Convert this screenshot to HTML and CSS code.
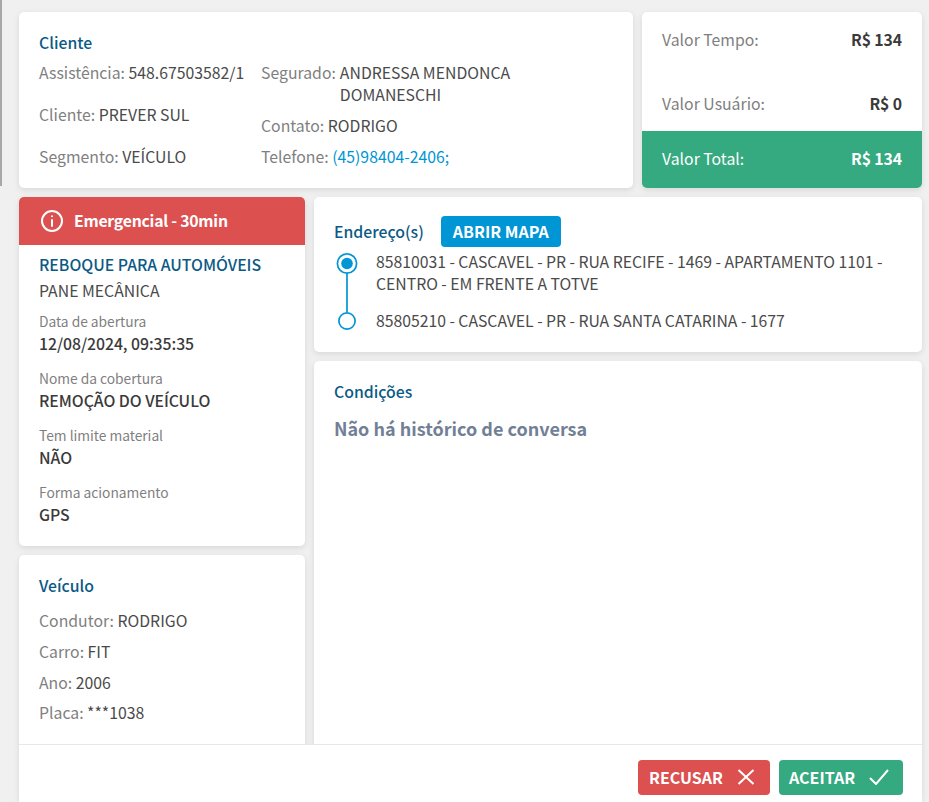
FILE: index.html
```html
<!DOCTYPE html>
<html lang="pt-BR">
<head>
<meta charset="utf-8">
<title>Serviço</title>
<link rel="stylesheet" href="styles.css">
</head>
<body>
<div class="edge"></div>
<main class="page">
  <section class="top">
    <div class="card client">
      <h2 class="title">Cliente</h2>
      <div class="client-cols">
        <div class="client-col spread">
          <p class="row"><span class="k">Assistência:</span> 548.67503582/1</p>
          <p class="row"><span class="k">Cliente:</span> PREVER SUL</p>
          <p class="row"><span class="k">Segmento:</span> VEÍCULO</p>
        </div>
        <div class="client-col">
          <p class="row hang"><span class="k">Segurado:</span> <span class="hang-v">ANDRESSA MENDONCA DOMANESCHI</span></p>
          <p class="row"><span class="k">Contato:</span> RODRIGO</p>
          <p class="row"><span class="k">Telefone:</span> <span class="link">(45)98404-2406;</span></p>
        </div>
      </div>
    </div>
    <div class="card values">
      <div class="value-list">
        <div class="value-row"><span class="k">Valor Tempo:</span><strong>R$ 134</strong></div>
        <div class="value-row"><span class="k">Valor Usuário:</span><strong>R$ 0</strong></div>
      </div>
      <div class="value-total"><span>Valor Total:</span><strong>R$ 134</strong></div>
    </div>
  </section>
  <section class="bottom">
    <div class="left">
      <div class="card service">
        <div class="alert">
          <svg class="alert-icon" viewBox="0 0 24 24" width="24" height="24" fill="none" stroke="#fff" stroke-width="2" stroke-linecap="round"><circle cx="12" cy="12" r="10"/><path d="M12 11v6"/><path d="M12 7.2v.1"/></svg>
          <span>Emergencial - 30min</span>
        </div>
        <div class="service-body">
          <h3 class="svc-name">REBOQUE PARA AUTOMÓVEIS</h3>
          <p class="svc-sub">PANE MECÂNICA</p>
          <div class="field"><span class="f-label">Data de abertura</span><span class="f-value">12/08/2024, 09:35:35</span></div>
          <div class="field"><span class="f-label">Nome da cobertura</span><span class="f-value">REMOÇÃO DO VEÍCULO</span></div>
          <div class="field"><span class="f-label">Tem limite material</span><span class="f-value">NÃO</span></div>
          <div class="field"><span class="f-label">Forma acionamento</span><span class="f-value">GPS</span></div>
        </div>
      </div>
      <div class="card vehicle">
        <h2 class="title">Veículo</h2>
        <p class="row"><span class="k">Condutor:</span> RODRIGO</p>
        <p class="row"><span class="k">Carro:</span> FIT</p>
        <p class="row"><span class="k">Ano:</span> 2006</p>
        <p class="row"><span class="k">Placa:</span> ***1038</p>
      </div>
    </div>
    <div class="right">
      <div class="card address">
        <div class="addr-head">
          <h2 class="title">Endereço(s)</h2>
          <button class="map-btn" type="button">ABRIR MAPA</button>
        </div>
        <div class="addr-body">
          <svg class="route" width="22" height="78" viewBox="0 0 22 78" fill="none" stroke="#0095d4" stroke-width="1.7"><circle cx="11" cy="10.5" r="9.6"/><circle cx="11" cy="10.5" r="5.8" fill="#0095d4" stroke="none"/><path d="M11 20v39"/><circle cx="11" cy="68" r="8.1"/></svg>
          <div class="addr-list">
            <p class="addr">85810031 - CASCAVEL - PR - RUA RECIFE - 1469 - APARTAMENTO 1101 - CENTRO - EM FRENTE A TOTVE</p>
            <p class="addr">85805210 - CASCAVEL - PR - RUA SANTA CATARINA - 1677</p>
          </div>
        </div>
      </div>
      <div class="card conditions">
        <h2 class="title">Condições</h2>
        <p class="empty">Não há histórico de conversa</p>
      </div>
    </div>
  </section>
</main>
<footer class="footer">
  <button class="action refuse" type="button">RECUSAR
    <svg width="18" height="18" viewBox="0 0 18 18" fill="none" stroke="#fff" stroke-width="2"><path d="M1.5 2l15 14M16.5 2l-15 14"/></svg>
  </button>
  <button class="action accept" type="button">ACEITAR
    <svg width="20" height="16" viewBox="0 0 20 16" fill="none" stroke="#fff" stroke-width="2"><path d="M1 9l6 6L19 1"/></svg>
  </button>
</footer>
</body>
</html>
```
FILE: styles.css
```css
* { box-sizing: border-box; }
html, body { height: 100%; }
body {
  margin: 0;
  background: #f0f0f0;
  overflow: hidden;
  font-family: "Noto Sans CJK SC", "Noto Sans", sans-serif;
  font-size: 15.8px;
  line-height: 22px;
  color: #4a4a4a;
}
p, h2, h3 { margin: 0; }
.edge { position: absolute; left: 0; top: 0; width: 2px; height: 186px; background: #a8a8a8; }
.page { height: 100vh; overflow: hidden; padding: 12px 7px 0 19px; display: flex; flex-direction: column; gap: 9px; }
.top { display: flex; gap: 9px; height: 176px; flex: none; }
.card { background: #fff; border-radius: 5px; box-shadow: 0 2px 6px rgba(0, 0, 0, .1); }
.title { font-size: 15.8px; font-weight: 500; line-height: 22px; color: #0b5a85; }
.k { color: #7f7f7f; }
.link { color: #0095d4; }
.client { flex: 1; padding: 20px; display: flex; flex-direction: column; gap: 8px; }
.client-cols { display: flex; gap: 16px; flex: 1; }
.client-col { display: flex; flex-direction: column; gap: 9px; }
.client-col.spread { justify-content: space-between; width: 206px; white-space: nowrap; }
.hang { display: flex; gap: 4px; width: 300px; }
.hang-v { flex: 1; }
.values { width: 280px; flex: none; display: flex; flex-direction: column; overflow: hidden; }
.value-list { flex: 1; padding: 17px 20px 16px; display: flex; flex-direction: column; justify-content: space-between; }
.value-row, .value-total { display: flex; justify-content: space-between; }
.value-row strong { color: #3a3a3a; font-weight: 700; letter-spacing: -.1px; }
.value-total { height: 57px; padding: 0 20px 1px; align-items: center; background: #35a97f; color: #fff; }
.value-total strong { font-weight: 700; letter-spacing: -.1px; }
.bottom { display: flex; gap: 9px; flex: 1; min-height: 0; }
.left { width: 286px; flex: none; display: flex; flex-direction: column; gap: 9px; }
.right { flex: 1; min-width: 0; display: flex; flex-direction: column; gap: 9px; }
.service { height: 349px; flex: none; overflow: hidden; }
.alert { height: 48px; padding: 0 21px 1px; display: flex; align-items: center; gap: 10px; background: #dc5050; color: #fff; font-weight: 700; letter-spacing: -.25px; }
.service-body { padding: 9px 20px; }
.svc-name { font-size: 15.8px; font-weight: 500; line-height: 22px; color: #0b5a85; }
.svc-sub { margin-top: 4px; }
.field { display: flex; flex-direction: column; margin-top: 8px; }
.field + .field { margin-top: 12px; }
.f-label { font-size: 13.8px; line-height: 22px; color: #7f7f7f; letter-spacing: -.03px; }
.f-value { margin-top: 1px; font-weight: 500; color: #3a3a3a; letter-spacing: -.05px; }
.vehicle { flex: 1; padding: 20px; display: flex; flex-direction: column; gap: 8.9px; }
.vehicle .title { margin-bottom: 4px; }
.vehicle .row:last-child { margin-top: -1px; }
.address { height: 155px; flex: none; padding: 19px 20px; }
.addr-head { display: flex; align-items: center; gap: 17px; }
.map-btn { height: 31px; width: 120px; border: 0; border-radius: 4px; background: #0095d4; color: #fff; font: 700 16px/22px "Noto Sans CJK SC", "Noto Sans", sans-serif; padding: 0 0 1px; }
.addr-body { display: flex; gap: 18px; margin-top: 4px; }
.route { flex: none; margin: 2px 0 0 2px; overflow: visible; }
.addr-list { flex: 1; min-width: 0; display: flex; flex-direction: column; gap: 15px; letter-spacing: -.03px; }
.conditions { flex: 1; padding: 20px; }
.empty { margin-top: 11px; font-size: 18px; line-height: 28px; font-weight: 700; color: #718096; }
.footer { position: fixed; left: 19px; right: 7px; bottom: 0; height: 58px; background: #fff; border-top: 1px solid #e8e8e8; display: flex; justify-content: flex-end; gap: 9px; padding: 15px 19px 0 0; }
.action { height: 35px; border: 0; border-radius: 4px; color: #fff; font: 700 16px/22px "Noto Sans CJK SC", "Noto Sans", sans-serif; display: flex; align-items: center; justify-content: space-between; padding: 0 15px 1px 11px; }
.accept { padding: 0 14px 1px 10px; }
.refuse { width: 132px; background: #dc5050; }
.accept { width: 124px; background: #35a97f; }
```
